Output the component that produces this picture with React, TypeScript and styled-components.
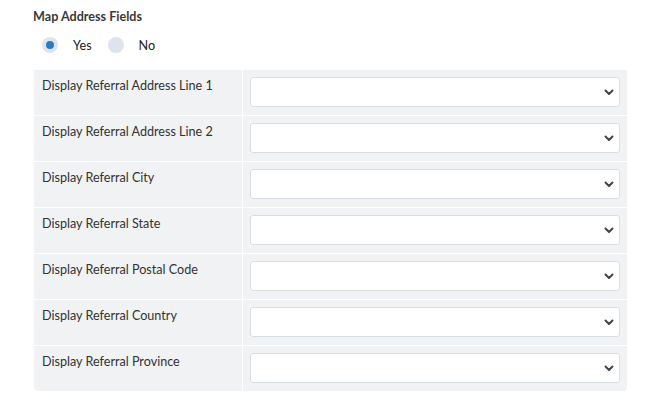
import React from "react";
import styled, { createGlobalStyle } from "styled-components";

const Global = createGlobalStyle`
  html, body { margin: 0; padding: 0; background: #fff; }
  body { font-family: Lato, "Open Sans", sans-serif; color: #333; }
`;

const Page = styled.div`
  padding: 8px 33px 0 33px;
`;

const Title = styled.div`
  font-size: 12.6px;
  font-weight: 700;
  line-height: 18px;
  color: #3a3a3a;
  margin-bottom: 10px;
`;

const RadioGroup = styled.div`
  display: flex;
  align-items: center;
  padding-left: 9px;
  height: 18px;
  margin-bottom: 16px;
`;

const RadioItem = styled.label`
  display: flex;
  align-items: center;
  gap: 15px;
  margin-right: 16px;
  font-size: 12.6px;
  color: #222;
`;

const Circle = styled.span<{ $checked?: boolean }>`
  width: 16px;
  height: 16px;
  border-radius: 50%;
  background: #dde4ec;
  display: flex;
  align-items: center;
  justify-content: center;
  &::after {
    content: "";
    width: 8px;
    height: 8px;
    border-radius: 50%;
    background: ${(p) => (p.$checked ? "#2b7bc4" : "transparent")};
  }
`;

const Table = styled.div`
  margin-left: 1px;
  width: 593px;
  display: grid;
  grid-template-columns: 208px 1fr;
  gap: 1px;
  background: #fff;
  border-radius: 0 0 4px 4px;
  overflow: hidden;
`;

const Label = styled.div`
  background: #f0f2f4;
  height: 45px;
  box-sizing: border-box;
  padding: 7px 8px 0 8px;
  font-size: 12.6px;
  line-height: 18px;
  color: #333;
`;

const Cell = styled.div`
  background: #f0f2f4;
  height: 45px;
  box-sizing: border-box;
  padding: 7px 7px 0 7px;
`;

const Select = styled.div`
  height: 30px;
  box-sizing: border-box;
  border: 1px solid #d8dee6;
  border-radius: 3px;
  background: #fff;
  display: flex;
  align-items: center;
  justify-content: flex-end;
  padding-right: 4px;
`;

const Chevron = () => (
  <svg width="12" height="12" viewBox="0 0 12 12">
    <path d="M2.5 4.5 L6 8 L9.5 4.5" fill="none" stroke="#444" strokeWidth="2" strokeLinecap="round" strokeLinejoin="round" />
  </svg>
);

const fields = [
  "Display Referral Address Line 1",
  "Display Referral Address Line 2",
  "Display Referral City",
  "Display Referral State",
  "Display Referral Postal Code",
  "Display Referral Country",
  "Display Referral Province",
];

export default function App() {
  return (
    <>
      <Global />
      <Page>
        <Title>Map Address Fields</Title>
        <RadioGroup>
          <RadioItem>
            <Circle $checked />
            Yes
          </RadioItem>
          <RadioItem>
            <Circle />
            No
          </RadioItem>
        </RadioGroup>
        <Table>
          {fields.map((f) => (
            <React.Fragment key={f}>
              <Label>{f}</Label>
              <Cell>
                <Select>
                  <Chevron />
                </Select>
              </Cell>
            </React.Fragment>
          ))}
        </Table>
      </Page>
    </>
  );
}
